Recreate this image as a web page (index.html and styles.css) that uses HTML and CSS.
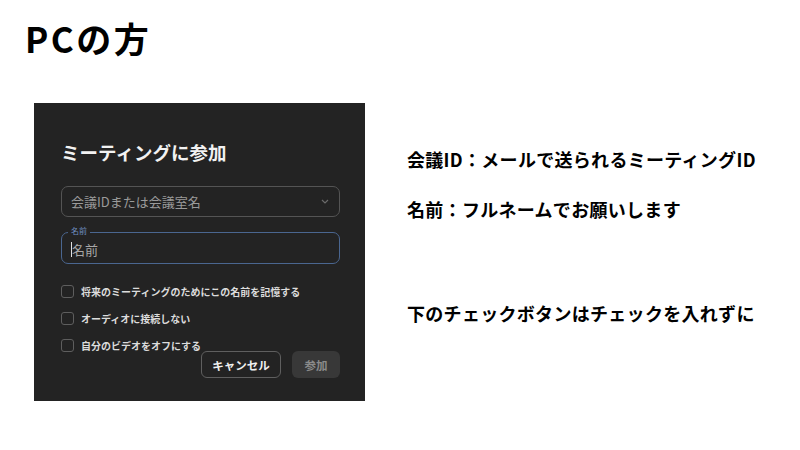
FILE: index.html
```html
<!DOCTYPE html>
<html lang="ja">
<head>
    <meta charset="UTF-8">
    <title>PCの方</title>
    <link rel="stylesheet" href="styles.css">
</head>
<body>
    <h1 class="page-title">PCの方</h1>

    <div class="main">
        <!-- Zoom join dialog -->
        <div class="join-panel">
            <h2 class="join-title">ミーティングに参加</h2>

            <div class="select-box">
                <span>会議IDまたは会議室名</span>
                <svg class="chevron" width="8" height="5" viewBox="0 0 8 5">
                    <path d="M1 1 L4 4 L7 1" fill="none" stroke="#6a6a6a" stroke-width="1.2"/>
                </svg>
            </div>

            <div class="name-box">
                <span class="name-label">名前</span>
                <span class="caret"></span><span class="name-text">名前</span>
            </div>

            <ul class="options">
                <li><span class="check"></span>将来のミーティングのためにこの名前を記憶する</li>
                <li><span class="check"></span>オーディオに接続しない</li>
                <li><span class="check"></span>自分のビデオをオフにする</li>
            </ul>

            <div class="actions">
                <button class="btn-cancel">キャンセル</button>
                <button class="btn-join">参加</button>
            </div>
        </div>

        <div class="notes">
            <p class="note">会議ID：メールで送られるミーティングID</p>
            <p class="note">名前：フルネームでお願いします</p>
            <p class="note note-last">下のチェックボタンはチェックを入れずに</p>
        </div>
    </div>
</body>
</html>
```

FILE: styles.css
```css
body {
    margin: 0;
    background: #fff;
    font-family: "Noto Sans CJK JP", "Noto Sans", sans-serif;
    color: #000;
}

.page-title {
    margin: 16px 0 0 25px;
    font-size: 35px;
    line-height: 44px;
    font-weight: 700;
    letter-spacing: 2.5px;
}

.main {
    display: flex;
    margin-top: 43px;
    padding-left: 34px;
}

.join-panel {
    width: 331px;
    height: 298px;
    box-sizing: border-box;
    background: #232323;
    padding: 35px 25px 0 27px;
}

.join-title {
    margin: 0;
    color: #f2f2f2;
    font-size: 18.5px;
    line-height: 28px;
    font-weight: 700;
}

.select-box {
    margin-top: 20px;
    height: 31px;
    border: 1px solid #545454;
    border-radius: 7px;
    box-sizing: border-box;
    display: flex;
    align-items: center;
    justify-content: space-between;
    padding: 0 10px 0 9px;
    color: #9a9a9a;
    font-size: 13px;
}

.name-box {
    position: relative;
    margin-top: 15px;
    height: 32px;
    border: 1px solid #4a6690;
    border-radius: 7px;
    box-sizing: border-box;
    display: flex;
    align-items: center;
    padding: 2px 9px 0;
    color: #a8a8a8;
    font-size: 13px;
}

.name-label {
    position: absolute;
    top: -7px;
    left: 6px;
    padding: 0 3px;
    background: #232323;
    color: #6f8fc0;
    font-size: 8px;
    line-height: 10px;
}

.caret {
    width: 1px;
    height: 15px;
    background: #e0e0e0;
}

.options {
    list-style: none;
    margin: 20px 0 0;
    padding: 0;
}

.options li {
    display: flex;
    align-items: center;
    height: 14px;
    margin-bottom: 13px;
    color: #dcdcdc;
    font-size: 10px;
    font-weight: 700;
}

.check {
    width: 11px;
    height: 11px;
    border: 1px solid #5e5e5e;
    border-radius: 3px;
    margin-right: 7px;
}

.actions {
    display: flex;
    justify-content: flex-end;
    gap: 11px;
    margin-top: -14px;
}

.actions button {
    height: 27px;
    border-radius: 6px;
    font-family: inherit;
    font-size: 11.5px;
    font-weight: 700;
    padding: 0;
}

.btn-cancel {
    width: 80px;
    background: transparent;
    border: 1px solid #5f5f5f;
    color: #f0f0f0;
}

.btn-join {
    width: 48px;
    background: #383838;
    border: none;
    color: #8a8a8a;
}

.notes {
    margin-left: 42px;
    padding-top: 44px;
}

.note {
    margin: 0 0 26px;
    font-size: 18px;
    line-height: 24px;
    font-weight: 700;
    letter-spacing: 0.3px;
}

.note-last {
    margin-top: 80px;
}
```
